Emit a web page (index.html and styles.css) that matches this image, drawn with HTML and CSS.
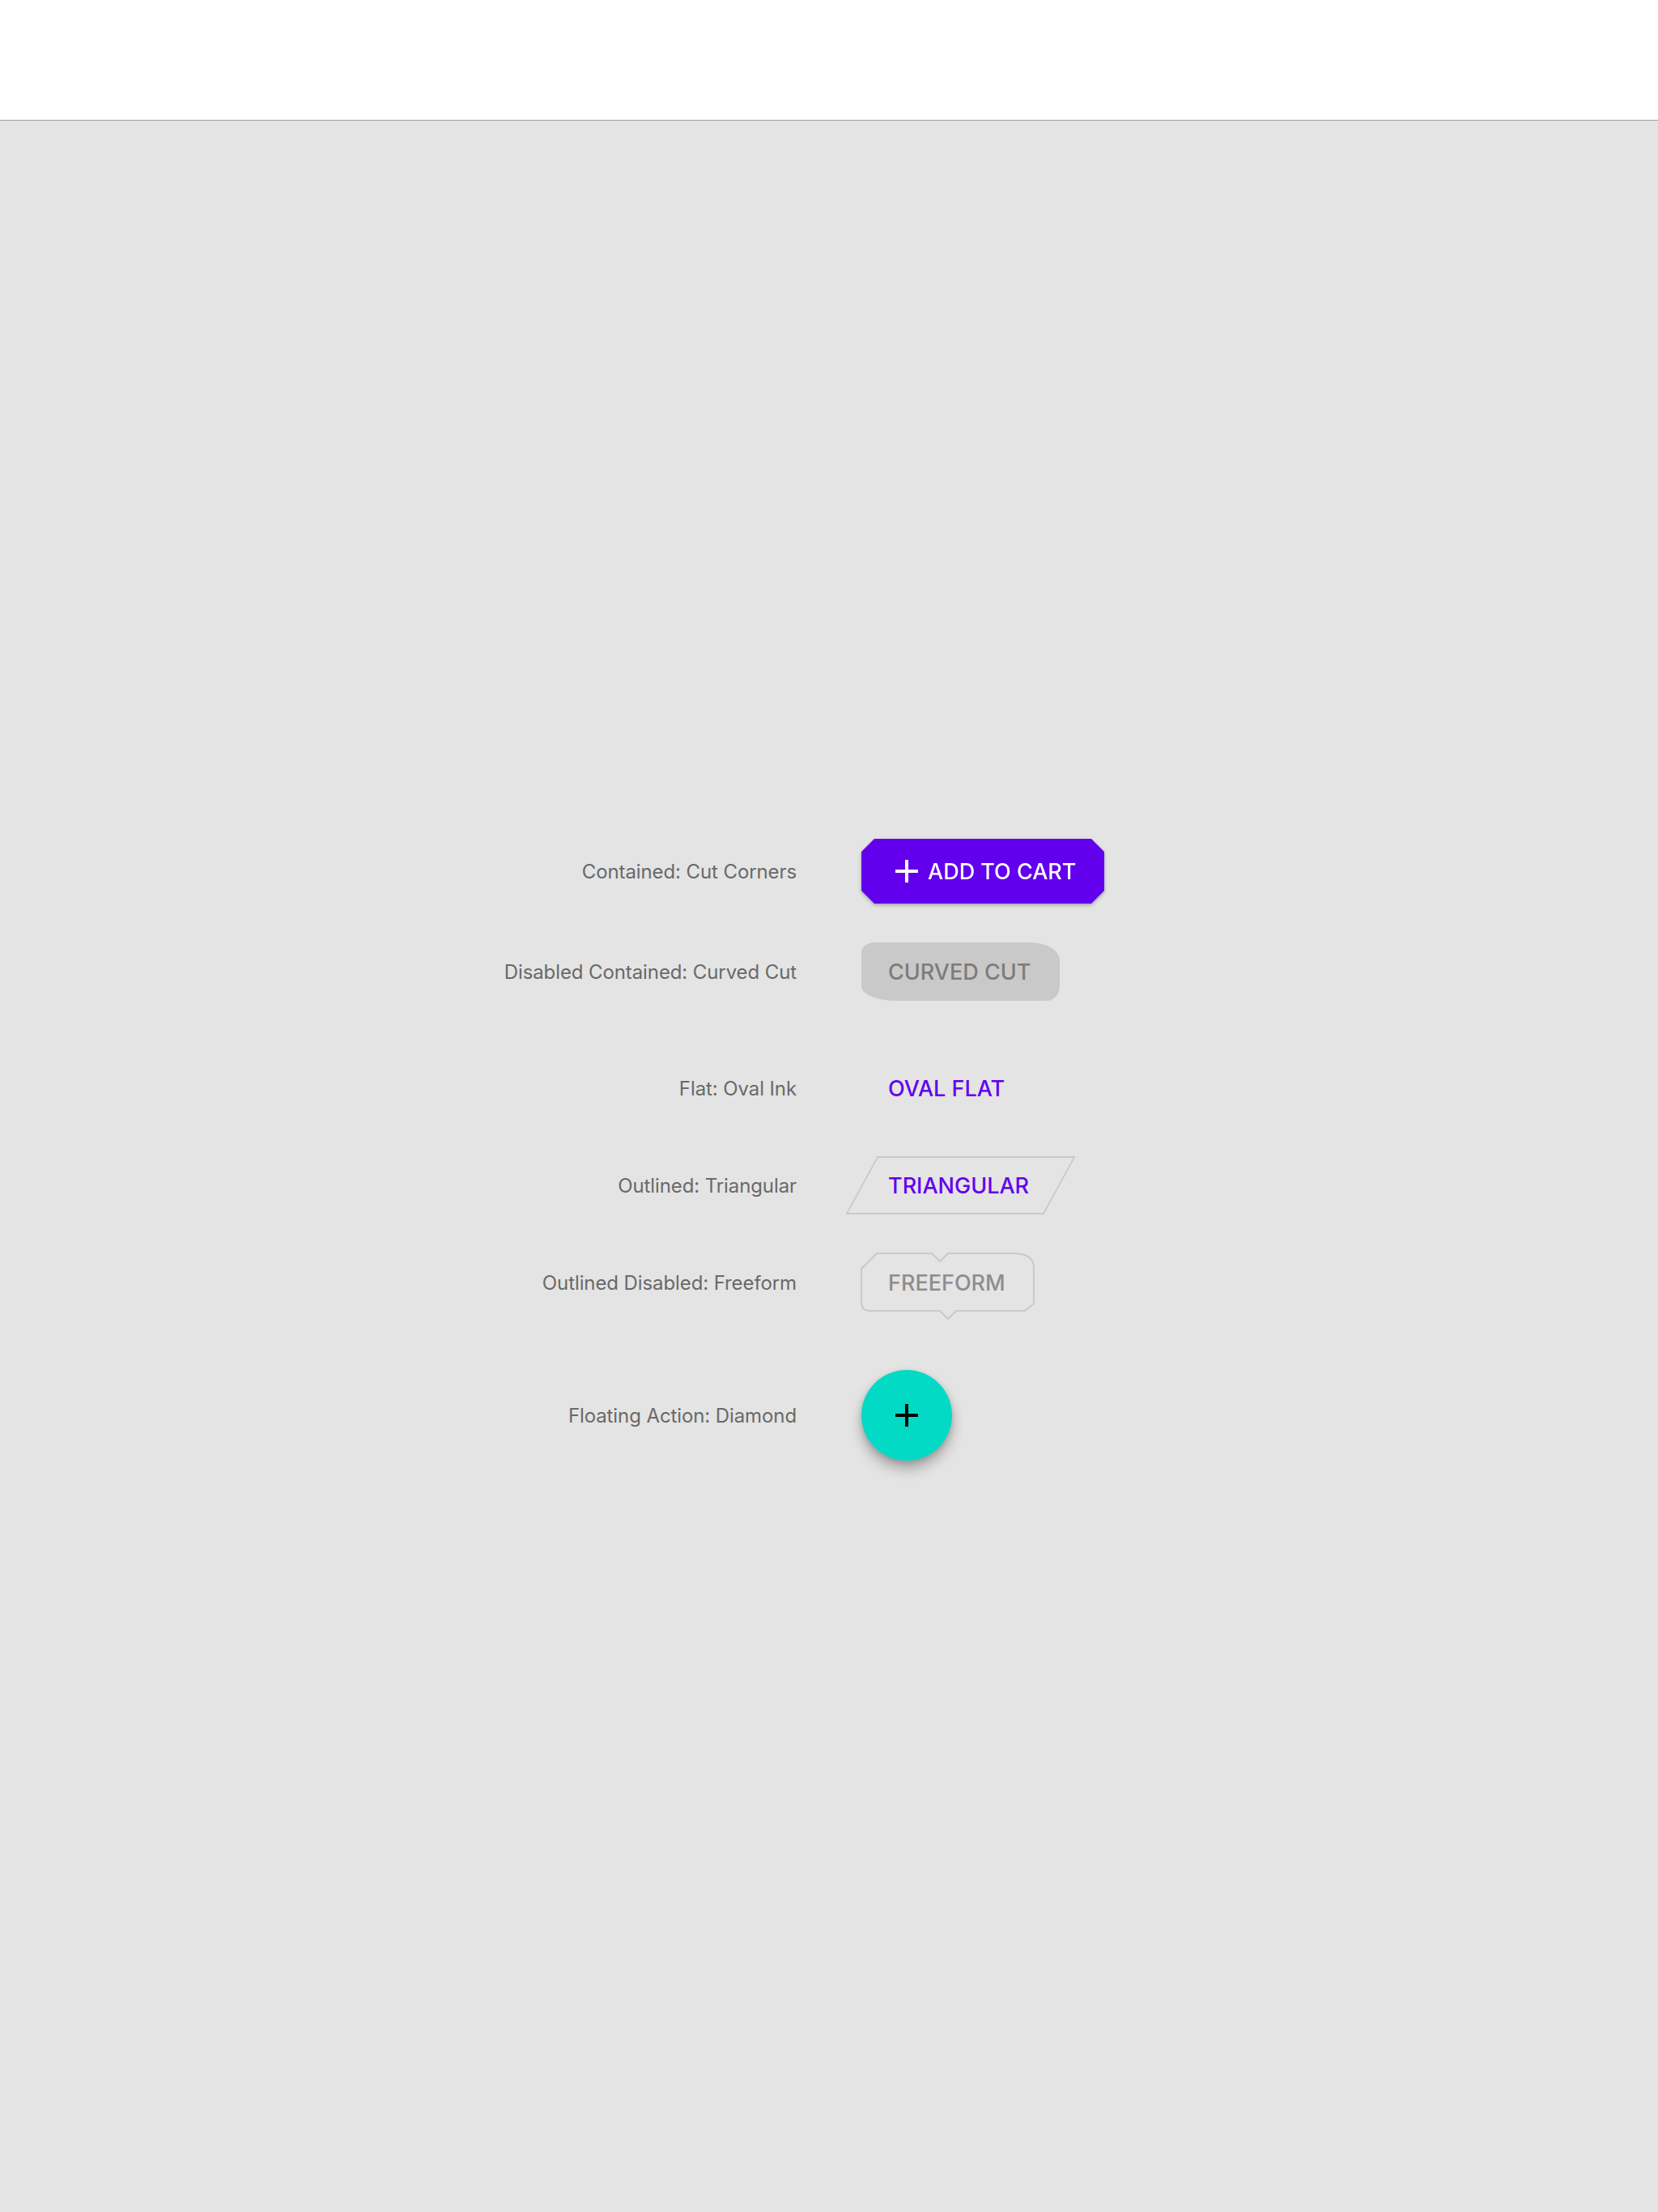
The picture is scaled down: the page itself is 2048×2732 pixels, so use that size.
FILE: index.html
```html
<!DOCTYPE html>
<html lang="en">
<head>
<meta charset="utf-8">
<title>Shaped Buttons</title>
<link rel="stylesheet" href="styles.css">
</head>
<body>
<header class="topbar"></header>
<main class="stage">
  <div class="row">
    <div class="label">Contained: Cut Corners</div>
    <div class="slot">
      <div class="lift">
        <button class="btn btn-cut">
          <svg class="icon" viewBox="0 0 24 24" width="48" height="48"><path d="M19 13h-6v6h-2v-6H5v-2h6V5h2v6h6v2z" fill="#ffffff"/></svg>
          <span>ADD TO CART</span>
        </button>
      </div>
    </div>
  </div>

  <div class="row">
    <div class="label">Disabled Contained: Curved Cut</div>
    <div class="slot">
      <button class="btn btn-curved" disabled>CURVED CUT</button>
    </div>
  </div>

  <div class="row row-spaced">
    <div class="label">Flat: Oval Ink</div>
    <div class="slot">
      <button class="btn btn-flat">OVAL FLAT</button>
    </div>
  </div>

  <div class="row">
    <div class="label">Outlined: Triangular</div>
    <div class="slot">
      <button class="btn btn-tri"><span>TRIANGULAR</span></button>
    </div>
  </div>

  <div class="row">
    <div class="label">Outlined Disabled: Freeform</div>
    <div class="slot">
      <button class="btn btn-free" disabled>
        <svg class="free-outline" viewBox="0 0 216 84" width="216" height="84"><path d="M1 20 L20 1 L88 1 L98 11 L108 1 L190 1 Q214 2 214 18 L214 63 L203 72 L118 72 L108 82 L98 72 L12 72 Q1 72 1 61 Z" fill="none" stroke="#c9c9c9" stroke-width="2" stroke-linejoin="round"/></svg>
        <span>FREEFORM</span>
      </button>
    </div>
  </div>

  <div class="row row-fab">
    <div class="label">Floating Action: Diamond</div>
    <div class="slot">
      <button class="fab">
        <svg class="icon" viewBox="0 0 24 24" width="48" height="48"><path d="M19 13h-6v6h-2v-6H5v-2h6V5h2v6h6v2z" fill="#000000"/></svg>
      </button>
    </div>
  </div>
</main>
</body>
</html>
```

FILE: styles.css
```css
html, body {
  margin: 0;
  padding: 0;
}

body {
  width: 2048px;
  min-height: 2732px;
  background: #e4e4e4;
  font-family: "Inter", "Noto Sans", "Liberation Sans", sans-serif;
}

.topbar {
  height: 148px;
  background: #ffffff;
  border-bottom: 1px solid #a0a0a0;
}

.stage {
  display: flex;
  flex-direction: column;
  gap: 48px;
  padding-top: 887px;
}

.row {
  display: grid;
  grid-template-columns: 1fr 1fr;
  column-gap: 80px;
  align-items: center;
}

.row-spaced,
.row-fab {
  margin-top: 24px;
}

.label {
  text-align: right;
  font-size: 24px;
  color: #696969;
  letter-spacing: -0.1px;
}

.slot {
  display: flex;
  align-items: center;
}

.btn {
  box-sizing: border-box;
  display: flex;
  align-items: center;
  height: 72px;
  margin: 0;
  border: 0;
  padding: 0 0 0 33px;
  background: transparent;
  font-family: inherit;
  font-size: 27px;
  font-weight: 500;
  letter-spacing: 0;
  white-space: nowrap;
  cursor: pointer;
}

.icon {
  display: block;
  flex: none;
}

.lift {
  filter: drop-shadow(0 2px 2px rgba(0, 0, 0, 0.28));
}

.btn-cut {
  width: 300px;
  height: 80px;
  padding-left: 32px;
  gap: 2px;
  background: #6200ee;
  color: #ffffff;
  clip-path: polygon(16px 0, calc(100% - 16px) 0, 100% 16px, 100% calc(100% - 16px), calc(100% - 16px) 100%, 16px 100%, 0 calc(100% - 16px), 0 16px);
}

.btn-curved {
  width: 245px;
  background: #c9c9c9;
  color: #7c7c7c;
  border-radius: 16px 36px 16px 43px / 13px 22px 18px 18px;
  cursor: default;
}

.btn-flat {
  width: 245px;
  color: #6200ee;
}

.btn-tri {
  position: relative;
  width: 245px;
  color: #6200ee;
}

.btn-tri::before {
  content: "";
  position: absolute;
  inset: 0;
  border: 2px solid #c9c9c9;
  transform: skewX(-28.7deg);
}

.btn-tri span {
  position: relative;
}

.btn-free {
  position: relative;
  width: 215px;
  color: #8d8d8d;
  cursor: default;
}

.free-outline {
  position: absolute;
  left: -1px;
  top: -1px;
  overflow: visible;
}

.btn-free span {
  position: relative;
}

.fab {
  display: flex;
  align-items: center;
  justify-content: center;
  width: 112px;
  height: 112px;
  margin: 0;
  padding: 0;
  border: 0;
  border-radius: 50%;
  background: #03dac6;
  box-shadow: 0 10px 16px rgba(0, 0, 0, 0.28), 0 2px 6px rgba(0, 0, 0, 0.12);
  cursor: pointer;
}
```
